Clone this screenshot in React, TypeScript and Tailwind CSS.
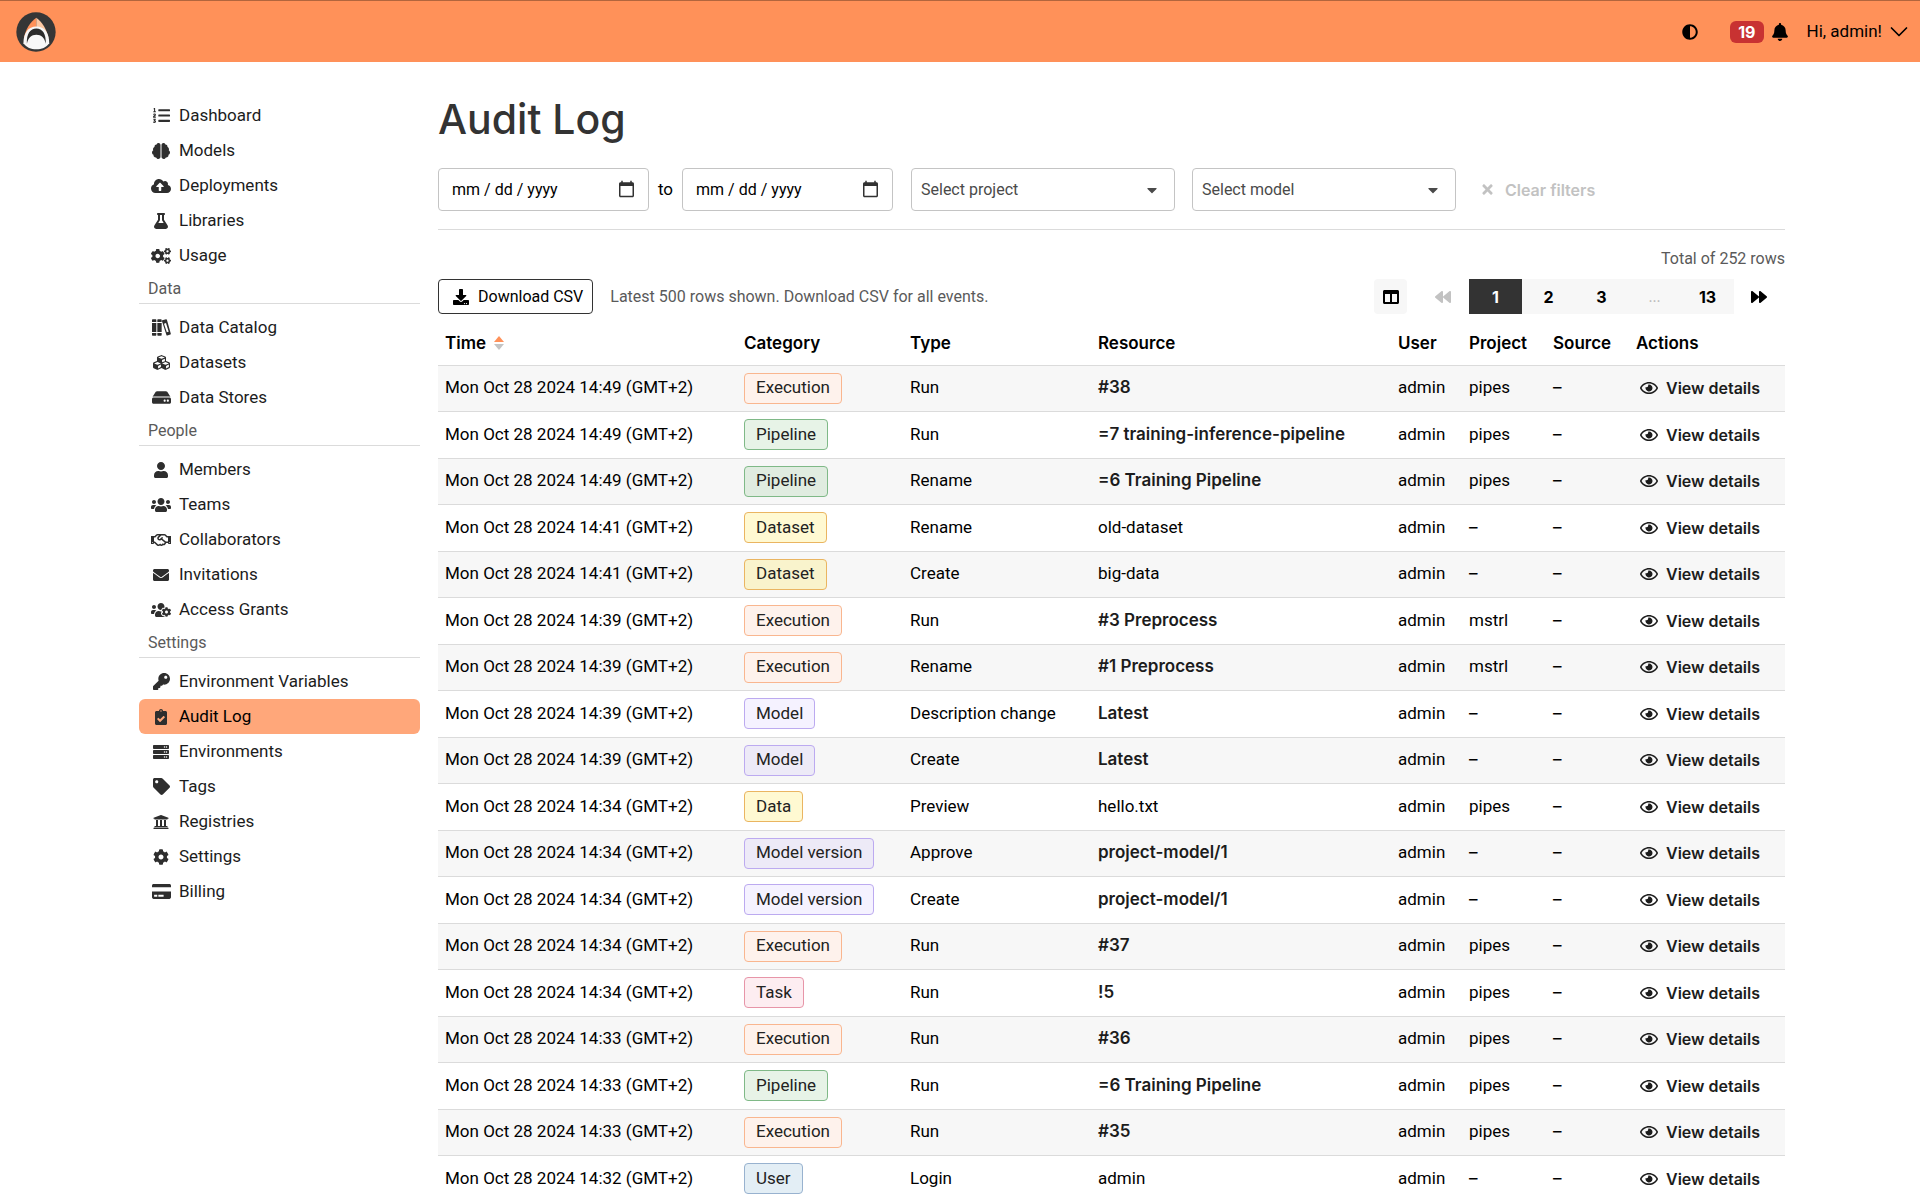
import { useState } from "react";
import type { ReactNode } from "react";
import clsx from "clsx";
import {
  FaAdjust,
  FaBackward,
  FaBell,
  FaBrain,
  FaCaretDown,
  FaClipboardCheck,
  FaCloudUploadAlt,
  FaCog,
  FaCogs,
  FaColumns,
  FaCreditCard,
  FaCubes,
  FaDownload,
  FaEnvelope,
  FaFlask,
  FaForward,
  FaHdd,
  FaKey,
  FaListOl,
  FaRegEye,
  FaRegHandshake,
  FaServer,
  FaTag,
  FaTimes,
  FaUniversity,
  FaUser,
  FaUsers,
  FaUsersCog,
} from "react-icons/fa";

interface NavItem {
  label: string;
  icon: ReactNode;
}

interface NavGroup {
  title?: string;
  items: NavItem[];
}

interface LogEntry {
  time: string;
  category: string;
  type: string;
  resource: string;
  linked: boolean;
  project?: string;
}

function BooksIcon() {
  return (
    <svg width="19" height="17" viewBox="0 0 57 51" fill="currentColor" aria-hidden="true">
      <path d="M2 1h9a2 2 0 0 1 2 2v6H0V3a2 2 0 0 1 2-2zM0 12h13v27H0zM0 42h13v6a2 2 0 0 1-2 2H2a2 2 0 0 1-2-2z" />
      <path d="M18 1h9a2 2 0 0 1 2 2v6H16V3a2 2 0 0 1 2-2zM16 12h13v27H16zM16 42h13v6a2 2 0 0 1-2 2h-9a2 2 0 0 1-2-2z" />
      <path
        fillRule="evenodd"
        d="M31 4 42 1q2-.5 2.700 1.500L56.500 44q.5 2-1.500 2.600L46 49.500q-2 .5-2.700-1.500L30 6.500q-.5-2 1-2.500zM36 14l8.500 26 5.500-1.700L42 12z"
      />
    </svg>
  );
}

const navGroups: NavGroup[] = [
  {
    items: [
      { label: "Dashboard", icon: <FaListOl size={17} /> },
      { label: "Models", icon: <FaBrain size={18} /> },
      { label: "Deployments", icon: <FaCloudUploadAlt size={20} /> },
      { label: "Libraries", icon: <FaFlask size={16} /> },
      { label: "Usage", icon: <FaCogs size={20} /> },
    ],
  },
  {
    title: "Data",
    items: [
      { label: "Data Catalog", icon: <BooksIcon /> },
      { label: "Datasets", icon: <FaCubes size={17} /> },
      { label: "Data Stores", icon: <FaHdd size={19} /> },
    ],
  },
  {
    title: "People",
    items: [
      { label: "Members", icon: <FaUser size={16} /> },
      { label: "Teams", icon: <FaUsers size={20} /> },
      { label: "Collaborators", icon: <FaRegHandshake size={20} /> },
      { label: "Invitations", icon: <FaEnvelope size={16} /> },
      { label: "Access Grants", icon: <FaUsersCog size={20} /> },
    ],
  },
  {
    title: "Settings",
    items: [
      { label: "Environment Variables", icon: <FaKey size={17} /> },
      { label: "Audit Log", icon: <FaClipboardCheck size={16} /> },
      { label: "Environments", icon: <FaServer size={16} /> },
      { label: "Tags", icon: <FaTag size={17} /> },
      { label: "Registries", icon: <FaUniversity size={16} /> },
      { label: "Settings", icon: <FaCog size={16} /> },
      { label: "Billing", icon: <FaCreditCard size={19} /> },
    ],
  },
];

const entries: LogEntry[] = [
  { time: "14:49", category: "Execution", type: "Run", resource: "#38", linked: true, project: "pipes" },
  { time: "14:49", category: "Pipeline", type: "Run", resource: "=7 training-inference-pipeline", linked: true, project: "pipes" },
  { time: "14:49", category: "Pipeline", type: "Rename", resource: "=6 Training Pipeline", linked: true, project: "pipes" },
  { time: "14:41", category: "Dataset", type: "Rename", resource: "old-dataset", linked: false },
  { time: "14:41", category: "Dataset", type: "Create", resource: "big-data", linked: false },
  { time: "14:39", category: "Execution", type: "Run", resource: "#3 Preprocess", linked: true, project: "mstrl" },
  { time: "14:39", category: "Execution", type: "Rename", resource: "#1 Preprocess", linked: true, project: "mstrl" },
  { time: "14:39", category: "Model", type: "Description change", resource: "Latest", linked: true },
  { time: "14:39", category: "Model", type: "Create", resource: "Latest", linked: true },
  { time: "14:34", category: "Data", type: "Preview", resource: "hello.txt", linked: false, project: "pipes" },
  { time: "14:34", category: "Model version", type: "Approve", resource: "project-model/1", linked: true },
  { time: "14:34", category: "Model version", type: "Create", resource: "project-model/1", linked: true },
  { time: "14:34", category: "Execution", type: "Run", resource: "#37", linked: true, project: "pipes" },
  { time: "14:34", category: "Task", type: "Run", resource: "!5", linked: true, project: "pipes" },
  { time: "14:33", category: "Execution", type: "Run", resource: "#36", linked: true, project: "pipes" },
  { time: "14:33", category: "Pipeline", type: "Run", resource: "=6 Training Pipeline", linked: true, project: "pipes" },
  { time: "14:33", category: "Execution", type: "Run", resource: "#35", linked: true, project: "pipes" },
  { time: "14:32", category: "User", type: "Login", resource: "admin", linked: false },
];

const categoryStyles: Record<string, string> = {
  Execution: "border-[#f9b68f] bg-[#fef2ec]",
  Pipeline: "border-[#7fb987] bg-[#43a047]/13",
  Dataset: "border-[#eab561] bg-[#ffe94d]/25",
  Data: "border-[#eab561] bg-[#ffe94d]/25",
  Model: "border-[#bcaaf0] bg-[#7c5cff]/8",
  "Model version": "border-[#bcaaf0] bg-[#7c5cff]/8",
  Task: "border-[#e795a8] bg-[#e91e4a]/8",
  User: "border-[#98b2cf] bg-[#2a7ab0]/13",
};

function Logo() {
  return (
    <svg width="40" height="40" viewBox="0 0 118 118" aria-hidden="true">
      <circle cx="59" cy="59" r="58" fill="#363636" />
      <path d="M60 17C42 29 28 52 23 78L60 60z" fill="#ff9159" />
      <path d="M60 17c17 12 31 35 36 61L60 60z" fill="#ffc9a3" />
      <path d="M22 92C22 62 36 43 60 43s38 19 38 49c-9 13-22 18-38 18S31 105 22 92z" fill="#f7f7f7" />
      <path d="M32 94C31 64 42 49 60 49s29 15 28 45C84 75 75 67 60 67S36 75 32 94z" fill="#2b2b2b" />
    </svg>
  );
}

function Header() {
  return (
    <header className="flex h-[62px] items-center justify-between border-t border-[#b2653d] bg-[#ff9159] pr-3 pl-4 text-black">
      <a href="#" aria-label="Home">
        <Logo />
      </a>
      <div className="flex items-center">
        <button aria-label="Toggle theme" className="mr-8">
          <FaAdjust size={16} />
        </button>
        <button aria-label="Notifications" className="mr-[18px] flex items-center gap-[7px]">
          <span className="rounded-md bg-[#c83232] px-2 font-[Inter] text-base leading-[22px] font-bold text-white">19</span>
          <FaBell size={18} />
        </button>
        <button className="flex items-center gap-2 text-[17px]">
          Hi, admin!
          <svg width="18" height="18" viewBox="0 0 18 18" fill="none" stroke="currentColor" strokeWidth="1.700" strokeLinecap="round" strokeLinejoin="round" aria-hidden="true">
            <path d="M1.500 5 9 12.500 16.500 5" />
          </svg>
        </button>
      </div>
    </header>
  );
}

function Sidebar() {
  return (
    <nav className="w-[281px] shrink-0">
      {navGroups.map((group, i) => (
        <div key={i}>
          {group.title && (
            <h2 className="mb-[6px] h-[31px] border-b border-[#dbdbdb] px-[9px] text-base leading-[31px] text-[#5a5a5a]">{group.title}</h2>
          )}
          <ul>
            {group.items.map((item) => (
              <li key={item.label}>
                <a
                  href="#"
                  className={clsx(
                    "flex h-[35px] items-center gap-2 rounded-md px-3 text-[17px]",
                    item.label === "Audit Log" ? "bg-[#ffa77a] text-black" : "text-[#1c1c1c] hover:bg-gray-100",
                  )}
                >
                  <span className="flex w-5 justify-center text-[#2e2e2e]">{item.icon}</span>
                  {item.label}
                </a>
              </li>
            ))}
          </ul>
        </div>
      ))}
    </nav>
  );
}

function DateField({ label }: { label: string }) {
  return (
    <input
      type="date"
      aria-label={label}
      className="h-[43px] w-[211px] rounded border border-[#c4c4c4] bg-white pr-[10px] pl-3 text-base text-black [&::-webkit-calendar-picker-indicator]:h-[19px] [&::-webkit-calendar-picker-indicator]:w-[19px] [&::-webkit-calendar-picker-indicator]:opacity-80 [&::-webkit-datetime-edit-text]:px-[3px]"
    />
  );
}

function FilterSelect({ label }: { label: string }) {
  return (
    <div className="relative w-[264px]">
      <select
        aria-label={label}
        className="h-[43px] w-full appearance-none rounded border border-[#c4c4c4] bg-white px-[9px] text-base text-[#4a4a4a]"
      >
        <option>{label}</option>
      </select>
      <FaCaretDown size={16} className="pointer-events-none absolute top-[14px] right-[15px] text-[#4a4a4a]" />
    </div>
  );
}

function Filters() {
  return (
    <form className="flex items-center border-b border-[#dbdbdb] pb-[18px]" onSubmit={(e) => e.preventDefault()}>
      <DateField label="From date" />
      <span className="w-[33px] text-center text-[17px]">to</span>
      <DateField label="To date" />
      <div className="ml-[18px] flex gap-[17px]">
        <FilterSelect label="Select project" />
        <FilterSelect label="Select model" />
      </div>
      <button disabled className="ml-6 flex items-center gap-[10px] font-[Inter] text-base font-semibold text-[#c2c2c2]">
        <FaTimes size={15} />
        Clear filters
      </button>
    </form>
  );
}

function Pagination() {
  const [page, setPage] = useState("1");

  return (
    <div className="flex items-center font-[Inter] text-base font-bold">
      <button aria-label="Choose columns" className="mr-7 flex h-[35px] w-[33px] items-center justify-center rounded bg-[#f7f7f7]">
        <FaColumns size={16} />
      </button>
      <button aria-label="First page" disabled className="mr-[18px] text-[#c2c2c2]">
        <FaBackward size={16} />
      </button>
      <div className="flex bg-[#f7f7f7]">
        {["1", "2", "3", "...", "13"].map((p) => (
          <button
            key={p}
            disabled={p === "..."}
            onClick={() => setPage(p)}
            className={clsx(
              "h-[35px] w-[53px]",
              p === page && "bg-[#333] text-white",
              p === "..." && "text-sm font-normal text-[#b5b5b5]",
            )}
          >
            {p}
          </button>
        ))}
      </div>
      <button aria-label="Last page" className="mr-[18px] ml-[17px]">
        <FaForward size={16} />
      </button>
    </div>
  );
}

function SortIcon() {
  return (
    <svg width="10" height="14" viewBox="0 0 10 14" aria-hidden="true">
      <path d="M5 0l5 6H0z" fill="#ff9159" />
      <path d="M5 14l5-6H0z" fill="#c4c4c4" />
    </svg>
  );
}

function EmptyValue() {
  return <span className="font-[Inter]">–</span>;
}

function LogTable() {
  return (
    <table className="w-full table-fixed border-collapse text-left text-[17px] whitespace-nowrap">
      <colgroup>
        <col className="w-[299px]" />
        <col className="w-[166px]" />
        <col className="w-[188px]" />
        <col className="w-[300px]" />
        <col className="w-[71px]" />
        <col className="w-[84px]" />
        <col className="w-[83px]" />
        <col className="w-[156px]" />
      </colgroup>
      <thead>
        <tr className="h-[43px] border-b border-[#dbdbdb] font-[Inter]">
          <th className="px-[7px] font-semibold">
            <button className="flex items-center gap-2">
              Time
              <SortIcon />
            </button>
          </th>
          {["Category", "Type", "Resource", "User", "Project", "Source", "Actions"].map((name) => (
            <th key={name} className="px-[7px] font-semibold">
              {name}
            </th>
          ))}
        </tr>
      </thead>
      <tbody>
        {entries.map((entry, i) => (
          <tr key={i} className="border-b border-[#dbdbdb] odd:h-[46px] odd:bg-[#f7f7f7] even:h-[47px]">
            <td className="px-[7px]">Mon Oct 28 2024 {entry.time} (GMT+2)</td>
            <td className="px-[7px]">
              <span className={clsx("flex h-[31px] w-fit items-center rounded border px-[11px] text-[#222]", categoryStyles[entry.category])}>
                {entry.category}
              </span>
            </td>
            <td className="px-[7px]">{entry.type}</td>
            <td className="px-[7px]">
              {entry.linked ? (
                <a href="#" className="font-[Inter] font-semibold text-[#1c1c1c]">
                  {entry.resource}
                </a>
              ) : (
                entry.resource
              )}
            </td>
            <td className="px-[7px]">admin</td>
            <td className="px-[7px]">{entry.project ?? <EmptyValue />}</td>
            <td className="px-[7px]">
              <EmptyValue />
            </td>
            <td className="px-[7px]">
              <button className="flex items-center gap-2 pl-1 font-[Inter] text-base font-semibold text-[#1c1c1c]">
                <FaRegEye size={18} />
                View details
              </button>
            </td>
          </tr>
        ))}
      </tbody>
    </table>
  );
}

export default function App() {
  return (
    <div className="min-h-screen bg-white font-[Roboto,sans-serif] text-black">
      <Header />
      <div className="mx-auto flex max-w-[1650px] gap-[18px] pt-9 pl-1">
        <Sidebar />
        <main className="min-w-0 flex-1">
          <h1 className="mb-7 font-[Inter] text-[41px] leading-[42px] font-medium text-[#333]">Audit Log</h1>
          <Filters />
          <p className="mt-4 mb-[7px] text-right text-base leading-[26px] text-[#5a5a5a]">Total of 252 rows</p>
          <div className="flex items-center justify-between">
            <div className="flex items-center gap-[17px]">
              <button className="flex h-[35px] items-center gap-[9px] rounded border border-[#333] px-[9px] pl-[14px] text-base">
                <FaDownload size={16} />
                Download CSV
              </button>
              <p className="text-base text-[#5a5a5a]">Latest 500 rows shown. Download CSV for all events.</p>
            </div>
            <Pagination />
          </div>
          <div className="mt-2">
            <LogTable />
          </div>
        </main>
      </div>
    </div>
  );
}
